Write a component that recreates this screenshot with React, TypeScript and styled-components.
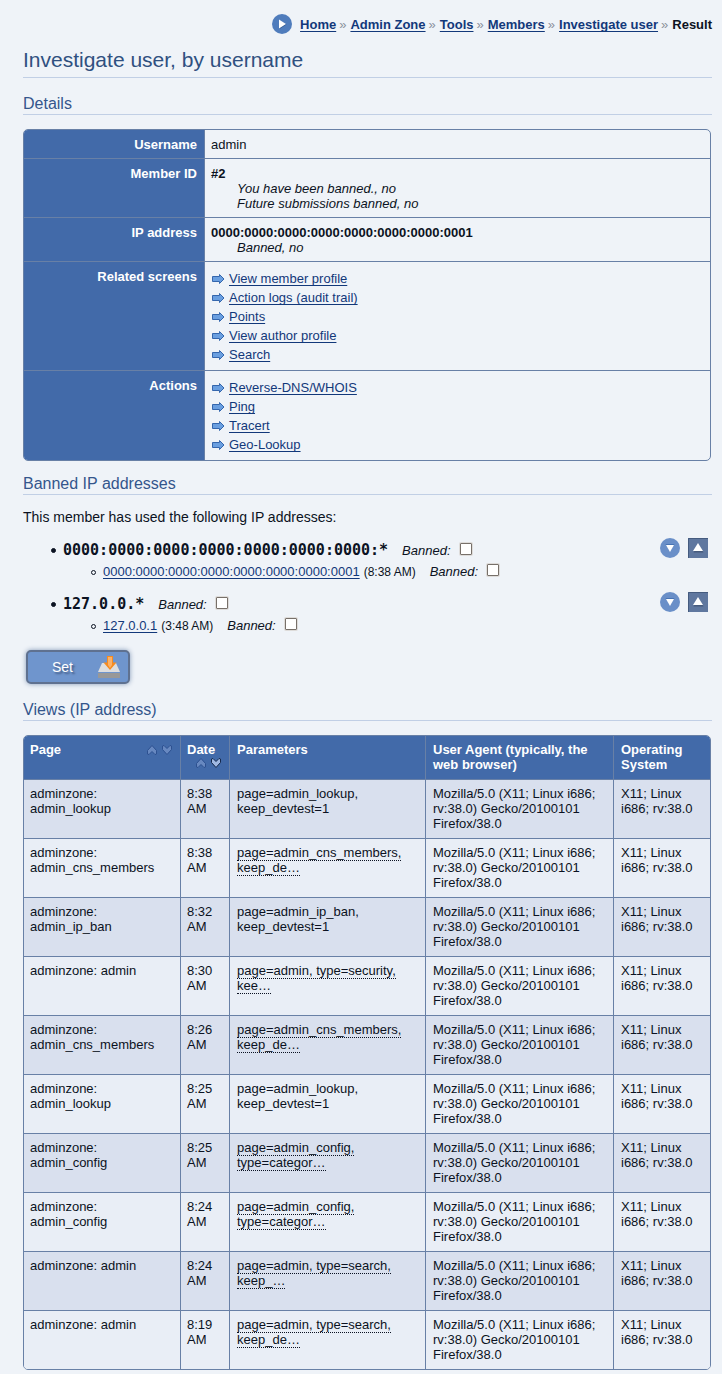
import React from "react";
import styled, { createGlobalStyle, css } from "styled-components";

const Global = createGlobalStyle`
  *, *::before, *::after { box-sizing: border-box; }
  body {
    margin: 0;
    background: #eff3f8;
    color: #0b1222;
    font: 13px/15px "Liberation Sans", Arial, sans-serif;
  }
`;

const line = "#6880a6";
const blue = "#426aa9";
const rule = "#c1cfe5";

const Page = styled.main`
  padding: 14px 10px 4px 23px;
`;

const Link = styled.a`
  color: #12387a;
  text-decoration: underline;
  text-underline-offset: 2px;
  text-decoration-skip-ink: none;
`;

const Breadcrumbs = styled.nav`
  display: flex;
  align-items: center;
  justify-content: flex-end;
  min-height: 20px;
  font-weight: bold;

  svg {
    flex: none;
    margin-right: 8px;
  }
`;

const Separator = styled.span`
  margin: 0 4px 0 3px;
  color: #8b919c;
  font-weight: normal;
`;

const Title = styled.h1`
  margin: 14px 0 17px;
  padding-bottom: 5px;
  border-bottom: 1px solid ${rule};
  color: #2f5080;
  font-size: 21px;
  font-weight: normal;
  line-height: 24px;
`;

const Heading = styled.h2`
  margin: 14px 0;
  padding-bottom: 1px;
  border-bottom: 1px solid ${rule};
  color: #34568c;
  font-size: 16px;
  font-weight: normal;
  line-height: 18px;
`;

const tableFrame = css`
  width: 100%;
  table-layout: fixed;
  border: 1px solid ${line};
  border-radius: 5px;
  border-spacing: 0;
  overflow: hidden;

  th,
  td {
    padding: 6px 7px 7px 6px;
    border: 0 solid ${line};
    text-align: left;
    vertical-align: top;
  }

  th {
    background: ${blue};
    color: #fff;
  }

  tr > *:not(:last-child) {
    border-right-width: 1px;
  }
`;

const TableBox = styled.div`
  margin-right: 1px;
`;

const DetailsTable = styled.table`
  ${tableFrame}

  th,
  td {
    padding: 7px 7px 6px 6px;
  }

  th {
    width: 181px;
    text-align: right;
  }

  tr:not(:last-child) > * {
    border-bottom-width: 1px;
  }
`;

const Note = styled.div`
  padding-left: 26px;
  font-style: italic;
`;

const ActionList = styled.ul`
  margin: 0;
  padding: 0;
  list-style: none;
`;

const ActionItem = styled.li`
  display: flex;
  align-items: center;
  gap: 3px;
  padding: 1px 0 1px 1px;
  line-height: 17px;
`;

const Intro = styled.p`
  margin: 0 0 13px;
  font-size: 14px;
  line-height: 16px;
`;

const Form = styled.form`
  margin-bottom: 17px;
`;

const IpList = styled.ul`
  display: flex;
  flex-direction: column;
  gap: 10px;
  margin: 0 0 14px;
  padding: 0;
  list-style: none;
`;

const SubList = styled.ul`
  margin: 0;
  padding: 0;
  list-style: none;
`;

const IpRow = styled.div<{ $nested?: boolean }>`
  display: flex;
  align-items: baseline;
  height: ${(p) => (p.$nested ? 20 : 24)}px;
  padding-left: ${(p) => (p.$nested ? 68 : 28)}px;
  line-height: ${(p) => (p.$nested ? 20 : 24)}px;

  &::before {
    content: "";
    align-self: center;
    width: 5px;
    height: 5px;
    margin-right: 7px;
    border: 1px solid #0b1222;
    border-radius: 50%;
    background: ${(p) => (p.$nested ? "transparent" : "#0b1222")};
  }
`;

const IpMask = styled.strong`
  font-family: "DejaVu Sans Mono", monospace;
  font-size: 15px;
`;

const Time = styled.span`
  margin-left: 4px;
  font-size: 12px;
`;

const BanLabel = styled.label`
  display: flex;
  align-items: baseline;
  gap: 9px;
  margin-left: 14px;
  font-style: italic;
`;

const CheckBox = styled.input`
  appearance: none;
  width: 12px;
  height: 12px;
  margin: 0 0 2px;
  border: 1px solid #77706a;
  border-radius: 1px;
  background: #fff;
  box-shadow: 0 0 0 1px #dedcda;

  &:checked {
    background: ${blue};
  }
`;

const RowTools = styled.div`
  display: flex;
  align-self: flex-start;
  gap: 8px;
  margin: 0 4px 0 auto;
`;

const IconButton = styled.button`
  display: block;
  padding: 0;
  border: 0;
  background: none;
  cursor: pointer;

  svg {
    display: block;
  }
`;

const SetButton = styled.button`
  display: flex;
  align-items: center;
  gap: 25px;
  height: 34px;
  margin-left: 3px;
  padding: 0 8px 0 24px;
  border: 2px solid #5f7190;
  border-radius: 5px;
  background: #6f95cd;
  box-shadow: 0 0 5px #8499b8;
  color: #fff;
  font: 14px/16px "Liberation Sans", Arial, sans-serif;
  text-shadow: 2px 2px 2px #40577f;
  cursor: pointer;
`;

const ViewsTable = styled.table`
  ${tableFrame}

  th:nth-child(n + 3),
  td:nth-child(n + 3) {
    padding-left: 7px;
  }

  thead th,
  tbody tr:not(:last-child) td {
    border-bottom-width: 1px;
  }

  tbody tr:nth-child(odd) {
    background: #d9e0ee;
  }

  tbody tr:nth-child(even) {
    background: #e9eef6;
  }
`;

const SortHead = styled.div`
  display: flex;
  flex-wrap: wrap;
  justify-content: space-between;
`;

const SortButtons = styled.span`
  display: flex;
  gap: 3px;
  margin-left: auto;
`;

const Truncated = styled.span`
  border-bottom: 1px dotted #0b1222;
`;

const Arrow = () => (
  <svg width="14" height="12" viewBox="0 0 14 12" aria-hidden="true">
    <path d="M.5 3.500h7v-2L12 6 7.500 10.500v-2h-7z" fill="#6a9fe0" stroke="#3466ad" />
  </svg>
);

const PlayIcon = () => (
  <svg width="20" height="20" viewBox="0 0 20 20" aria-hidden="true">
    <circle cx="10" cy="10" r="10" fill="#4f7cbc" />
    <path d="M7.500 6.500v8.500l7-4.500z" fill="#33598f" />
    <path d="M7 5.500v9l7-4.500z" fill="#fff" />
  </svg>
);

const DownIcon = () => (
  <svg width="20" height="20" viewBox="0 0 20 20" aria-hidden="true">
    <circle cx="10" cy="10" r="10" fill="#6a8fc8" />
    <path d="M5.500 6h9l-4.500 7z" fill="#4773b4" />
    <path d="M6 7h8l-4 7z" fill="#fff" />
  </svg>
);

const UpIcon = () => (
  <svg width="20" height="20" viewBox="0 0 20 20" aria-hidden="true">
    <path d="M0 0h20v20H0z" fill="#5f779f" />
    <path d="M.5 20V.5H20" fill="none" stroke="#455b7f" />
    <path d="M5.500 14.500h10l-5-8z" fill="#465a7c" />
    <path d="M5 13h10L10 5z" fill="#fff" />
  </svg>
);

const SaveIcon = () => (
  <svg width="22" height="22" viewBox="0 0 22 22" aria-hidden="true">
    <path d="M0 17h22v5H0z" fill="#989898" />
    <path d="M4 7h14l4 9H0z" fill="#dedede" />
    <path d="M9 0h6v6.500h3.500L12 14 5.500 6.500H9z" fill="#f68b1f" />
    <path d="M10 1h4v8l-2 3-2-3z" fill="#fbb168" />
  </svg>
);

const Chevron = ({ down, active }: { down?: boolean; active?: boolean }) => (
  <svg width="12" height="12" viewBox="0 0 12 12" aria-hidden="true">
    <path
      transform={down ? "rotate(180 6 6)" : undefined}
      d="M6 1.500l4.500 5v3.500L9 10.500 6 7.500l-3 3L1.500 10V6.500z"
      fill={active ? "#9fb8e2" : "#6788c0"}
      stroke={active ? "#15284c" : "#2d5190"}
      strokeLinejoin="round"
    />
  </svg>
);

function Ban({ label }: { label: string }) {
  return (
    <BanLabel>
      Banned:
      <CheckBox type="checkbox" aria-label={`Banned: ${label}`} />
    </BanLabel>
  );
}

function Sort({ title, activeDown }: { title: string; activeDown?: boolean }) {
  return (
    <SortHead>
      {title}
      <SortButtons>
        <IconButton type="button" aria-label={`Sort ${title} ascending`}>
          <Chevron />
        </IconButton>
        <IconButton type="button" aria-label={`Sort ${title} descending`}>
          <Chevron down active={activeDown} />
        </IconButton>
      </SortButtons>
    </SortHead>
  );
}

function Actions({ items }: { items: string[] }) {
  return (
    <ActionList>
      {items.map((item) => (
        <ActionItem key={item}>
          <Arrow />
          <Link href="#">{item}</Link>
        </ActionItem>
      ))}
    </ActionList>
  );
}

const crumbs = ["Home", "Admin Zone", "Tools", "Members", "Investigate user"];

const addresses = [
  {
    mask: "0000:0000:0000:0000:0000:0000:0000:*",
    ip: "0000:0000:0000:0000:0000:0000:0000:0001",
    time: "(8:38 AM)",
  },
  { mask: "127.0.0.*", ip: "127.0.0.1", time: "(3:48 AM)" },
];

const views: { page: string; date: string; params: string; cut?: boolean }[] = [
  { page: "admin_lookup", date: "8:38 AM", params: "page=admin_lookup, keep_devtest=1" },
  { page: "admin_cns_members", date: "8:38 AM", params: "page=admin_cns_members, keep_de…", cut: true },
  { page: "admin_ip_ban", date: "8:32 AM", params: "page=admin_ip_ban, keep_devtest=1" },
  { page: "admin", date: "8:30 AM", params: "page=admin, type=security, kee…", cut: true },
  { page: "admin_cns_members", date: "8:26 AM", params: "page=admin_cns_members, keep_de…", cut: true },
  { page: "admin_lookup", date: "8:25 AM", params: "page=admin_lookup, keep_devtest=1" },
  { page: "admin_config", date: "8:25 AM", params: "page=admin_config, type=categor…", cut: true },
  { page: "admin_config", date: "8:24 AM", params: "page=admin_config, type=categor…", cut: true },
  { page: "admin", date: "8:24 AM", params: "page=admin, type=search, keep_…", cut: true },
  { page: "admin", date: "8:19 AM", params: "page=admin, type=search, keep_de…", cut: true },
];

export default function App() {
  return (
    <Page>
      <Global />
      <Breadcrumbs aria-label="Breadcrumbs">
        <PlayIcon />
        {crumbs.map((crumb) => (
          <React.Fragment key={crumb}>
            <Link href="#">{crumb}</Link>
            <Separator>»</Separator>
          </React.Fragment>
        ))}
        <span>Result</span>
      </Breadcrumbs>

      <Title>Investigate user, by username</Title>

      <Heading>Details</Heading>
      <TableBox>
        <DetailsTable>
          <tbody>
            <tr>
              <th scope="row">Username</th>
              <td>admin</td>
            </tr>
            <tr>
              <th scope="row">Member ID</th>
              <td>
                <strong>#2</strong>
                <Note>You have been banned., no</Note>
                <Note>Future submissions banned, no</Note>
              </td>
            </tr>
            <tr>
              <th scope="row">IP address</th>
              <td>
                <strong>0000:0000:0000:0000:0000:0000:0000:0001</strong>
                <Note>Banned, no</Note>
              </td>
            </tr>
            <tr>
              <th scope="row">Related screens</th>
              <td>
                <Actions
                  items={["View member profile", "Action logs (audit trail)", "Points", "View author profile", "Search"]}
                />
              </td>
            </tr>
            <tr>
              <th scope="row">Actions</th>
              <td>
                <Actions items={["Reverse-DNS/WHOIS", "Ping", "Tracert", "Geo-Lookup"]} />
              </td>
            </tr>
          </tbody>
        </DetailsTable>
      </TableBox>

      <Heading>Banned IP addresses</Heading>
      <Form onSubmit={(e) => e.preventDefault()}>
        <Intro>This member has used the following IP addresses:</Intro>
        <IpList>
          {addresses.map(({ mask, ip, time }) => (
            <li key={mask}>
              <IpRow>
                <IpMask>{mask}</IpMask>
                <Ban label={mask} />
                <RowTools>
                  <IconButton type="button" aria-label={`Expand ${mask}`}>
                    <DownIcon />
                  </IconButton>
                  <IconButton type="button" aria-label={`Collapse ${mask}`}>
                    <UpIcon />
                  </IconButton>
                </RowTools>
              </IpRow>
              <SubList>
                <li>
                  <IpRow $nested>
                    <Link href="#">{ip}</Link>
                    <Time>{time}</Time>
                    <Ban label={ip} />
                  </IpRow>
                </li>
              </SubList>
            </li>
          ))}
        </IpList>
        <SetButton type="submit">
          Set
          <SaveIcon />
        </SetButton>
      </Form>

      <Heading>Views (IP address)</Heading>
      <TableBox>
        <ViewsTable>
          <colgroup>
            <col width="157" />
            <col width="49" />
            <col width="196" />
            <col width="188" />
            <col width="96" />
          </colgroup>
          <thead>
            <tr>
              <th scope="col">
                <Sort title="Page" />
              </th>
              <th scope="col">
                <Sort title="Date" activeDown />
              </th>
              <th scope="col">Parameters</th>
              <th scope="col">User Agent (typically, the web browser)</th>
              <th scope="col">Operating System</th>
            </tr>
          </thead>
          <tbody>
            {views.map((view, i) => (
              <tr key={i}>
                <td>adminzone: {view.page}</td>
                <td>{view.date}</td>
                <td>{view.cut ? <Truncated>{view.params}</Truncated> : view.params}</td>
                <td>Mozilla/5.0 (X11; Linux i686; rv:38.0) Gecko/20100101 Firefox/38.0</td>
                <td>X11; Linux i686; rv:38.0</td>
              </tr>
            ))}
          </tbody>
        </ViewsTable>
      </TableBox>
    </Page>
  );
}
